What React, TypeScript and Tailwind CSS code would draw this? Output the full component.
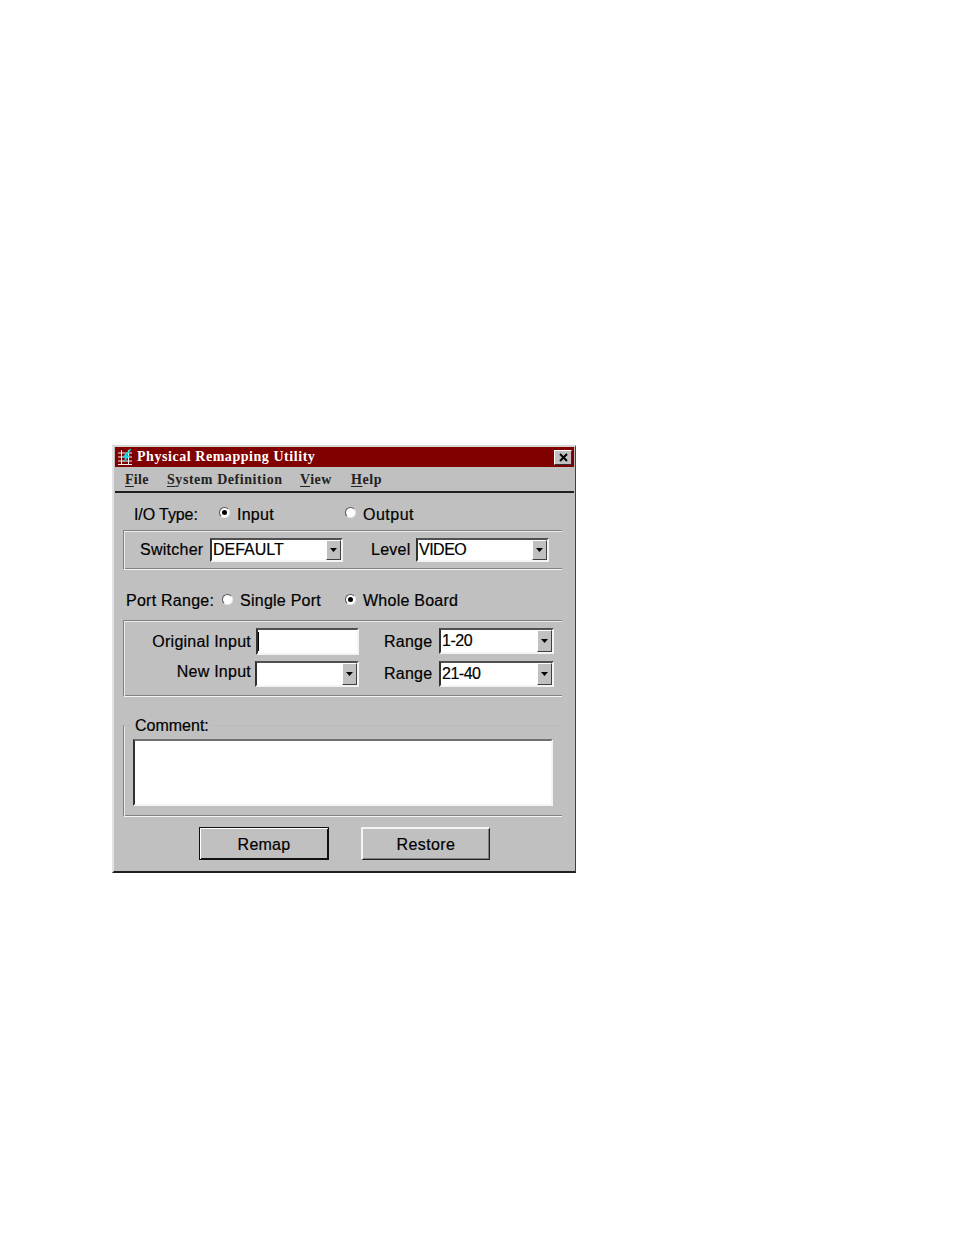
import React from "react";

const sans = "font-['Liberation_Sans',Arial,sans-serif]";
const etched = "border-t border-b border-l border-t-[#808080] border-l-[#808080] border-b-[#f4f4f4] shadow-[inset_1px_1px_0_#ececec,inset_0_-1px_0_#808080]";

function Radio({ checked }: { checked?: boolean }) {
  return (
    <span className="mb-[4px] flex h-[11px] w-[11px] shrink-0 items-center justify-center rounded-full border border-t-[#555555] border-l-[#555555] border-r-[#e8e8e8] border-b-[#e8e8e8] bg-white">
      {checked && <span className="h-[5px] w-[5px] rounded-full bg-black" />}
    </span>
  );
}

function Arrow() {
  return (
    <span className="flex h-full w-[15px] shrink-0 items-center justify-center border border-t-white border-l-white border-r-[#404040] border-b-[#404040] bg-[#c0c0c0]">
      <svg width="7" height="4" viewBox="0 0 7 4"><path d="M0 0h7L3.5 4z" fill="#000" /></svg>
    </span>
  );
}

function Combo({ w, h, text, cls }: { w: string; h: string; text: string; cls: string }) {
  return (
    <div className={`flex shrink-0 items-center border-2 border-t-[#505050] border-l-[#303030] border-r-[#f4f4f4] border-b-[#f4f4f4] bg-white ${w} ${h}`}>
      <span className={`flex-1 pl-[1px] text-[16px] text-black ${cls}`}>{text}</span>
      <Arrow />
    </div>
  );
}

function U({ children }: { children: React.ReactNode }) {
  return <span className="underline underline-offset-2">{children}</span>;
}

export default function App() {
  return (
    <div className={`min-h-[1235px] bg-white pl-[112px] pt-[445px] ${sans}`}>
      <div className="h-[428px] w-[464px] border-t-2 border-b-2 border-l-2 border-r border-t-[#d8d8d8] border-l-[#e4e4e4] border-r-[#404040] border-b-[#202020] bg-[#c0c0c0] pl-[1px] pr-[1px] text-[16px] leading-none tracking-[0.25px] text-black [-webkit-text-stroke:0.2px]">
        <div className="flex h-[20px] items-center bg-[#800000] pl-[2px] pr-[2px] [-webkit-text-stroke:0px]">
          <svg width="17" height="18" viewBox="0 0 17 18" className="shrink-0">
            <path d="M1 5h14M1 9h14M1 13h14M1 16.500h14M4.500 2v15M11.500 2v15" stroke="#f2f2f2" strokeWidth="1" fill="none" />
            <path d="M13 1L5 9.500h3.500L5.500 15l8-7.500H10L14.500 1z" fill="#19d9e0" />
          </svg>
          <span className="ml-[3px] flex-1 font-['Liberation_Serif',serif] text-[14px] font-bold tracking-[0.55px] text-white">
            Physical Remapping Utility
          </span>
          <span className="flex h-[15px] w-[18px] items-center justify-center border border-t-white border-l-white border-r-[#303030] border-b-[#303030] bg-[#c0c0c0]">
            <svg width="9" height="9" viewBox="0 0 9 9"><path d="M1 1l7 7M8 1L1 8" stroke="#000" strokeWidth="2" /></svg>
          </span>
        </div>
        <div className="flex h-[26px] items-center border-b-2 border-b-[#202020] pl-[10px] pt-[2px] font-['Liberation_Serif',serif] text-[14px] font-bold tracking-[0.55px] text-[#222222] [-webkit-text-stroke:0px]">
          <span className="w-[42px] tracking-[0.3px]"><U>F</U>ile</span>
          <span className="w-[133px]"><U>S</U>ystem Definition</span>
          <span className="w-[51px]"><U>V</U>iew</span>
          <span><U>H</U>elp</span>
        </div>
        <div className="pl-[8px] pr-[12px]">
          <div className="flex h-[37px] items-center pl-[11px] pt-[6px]">
            <span className="w-[85px] tracking-[-0.1px]">I/O Type:</span>
            <Radio checked />
            <span className="ml-[7px] w-[108px]">Input</span>
            <Radio />
            <span className="ml-[7px] tracking-[0.5px]">Output</span>
          </div>
          <div className={`flex h-[40px] items-center pl-[16px] ${etched}`}>
            <span className="w-[70px]">Switcher</span>
            <Combo w="w-[133px]" h="h-[24px]" text="DEFAULT" cls="tracking-[0px]" />
            <span className="ml-[28px] w-[45px]">Level</span>
            <Combo w="w-[133px]" h="h-[24px]" text="VIDEO" cls="tracking-[-0.5px]" />
          </div>
          <div className="flex h-[50px] items-center pl-[3px] pt-[12px]">
            <span className="w-[96px]">Port Range:</span>
            <Radio />
            <span className="ml-[7px] w-[105px]">Single Port</span>
            <Radio checked />
            <span className="ml-[7px]">Whole Board</span>
          </div>
          <div className={`flex h-[77px] flex-col gap-[6px] pt-[7px] ${etched}`}>
            <div className="flex h-[27px] items-center">
              <span className="w-[127px] text-right">Original Input</span>
              <div className="ml-[5px] flex h-[27px] w-[103px] shrink-0 items-center border-2 border-t-[#505050] border-l-[#303030] border-r-[#f4f4f4] border-b-[#f4f4f4] bg-white">
                <span className="h-[19px] w-[1px] bg-black" />
              </div>
              <span className="ml-[25px] w-[55px]">Range</span>
              <div className="self-start">
                <Combo w="w-[115px]" h="h-[26px]" text="1-20" cls="tracking-[-0.5px]" />
              </div>
            </div>
            <div className="flex h-[26px] items-center">
              <span className="mb-[5px] w-[127px] text-right">New Input</span>
              <div className="ml-[4px]">
                <Combo w="w-[104px]" h="h-[26px]" text="" cls="" />
              </div>
              <span className="ml-[25px] w-[55px]">Range</span>
              <Combo w="w-[115px]" h="h-[26px]" text="21-40" cls="tracking-[-0.5px]" />
            </div>
          </div>
          <div className="relative mt-[28px] h-[92px] border-t border-b border-l border-t-[#bababa] border-l-[#808080] border-b-[#f4f4f4] pl-[9px] pt-[13px] shadow-[inset_1px_0_0_#ececec,inset_0_-1px_0_#808080]">
            <span className="absolute left-[9px] top-[-8px] bg-[#c0c0c0] px-[2px] tracking-[0px]">Comment:</span>
            <div className="h-[67px] w-[420px] border-2 border-t-[#707070] border-l-[#303030] border-r-[#f4f4f4] border-b-[#f4f4f4] bg-white" />
          </div>
          <div className="mt-[10px] flex gap-[32px] pl-[76px]">
            <button className="h-[33px] w-[130px] border border-[#101010] pt-[2px] tracking-[0.25px] shadow-[inset_1px_1px_0_#ffffff,inset_-1px_-1px_0_#101010]">Remap</button>
            <button className="h-[33px] w-[129px] border-t-2 border-l-2 border-r border-b border-t-[#f4f4f4] border-l-[#f4f4f4] border-r-[#202020] border-b-[#202020] pt-[2px] tracking-[0.4px] shadow-[inset_-1px_-1px_0_#808080]">Restore</button>
          </div>
        </div>
      </div>
    </div>
  );
}
